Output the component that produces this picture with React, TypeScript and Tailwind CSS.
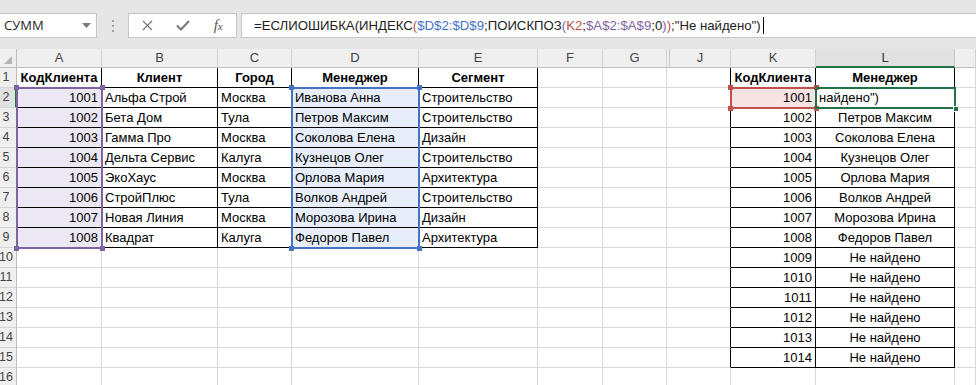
import React from "react";

const t1: string[][] = [
  ["КодКлиента", "Клиент", "Город", "Менеджер", "Сегмент"],
  ["1001", "Альфа Строй", "Москва", "Иванова Анна", "Строительство"],
  ["1002", "Бета Дом", "Тула", "Петров Максим", "Строительство"],
  ["1003", "Гамма Про", "Москва", "Соколова Елена", "Дизайн"],
  ["1004", "Дельта Сервис", "Калуга", "Кузнецов Олег", "Строительство"],
  ["1005", "ЭкоХаус", "Москва", "Орлова Мария", "Архитектура"],
  ["1006", "СтройПлюс", "Тула", "Волков Андрей", "Строительство"],
  ["1007", "Новая Линия", "Москва", "Морозова Ирина", "Дизайн"],
  ["1008", "Квадрат", "Калуга", "Федоров Павел", "Архитектура"],
];

const lCol: Record<number, string> = {
  3: "Петров Максим",
  4: "Соколова Елена",
  5: "Кузнецов Олег",
  6: "Орлова Мария",
  7: "Волков Андрей",
  8: "Морозова Ирина",
  9: "Федоров Павел",
};

const headers = ["A", "B", "C", "D", "E", "F", "G", "", "J", "K", "L", ""];

type Cell = { text: string; align: "l" | "r" | "c"; bold?: boolean };

function cellData(r: number, c: number): Cell {
  if (c <= 4 && r <= 9) {
    const txt = t1[r - 1][c];
    if (r === 1) return { text: txt, align: "c", bold: true };
    return { text: txt, align: c === 0 ? "r" : "l" };
  }
  if (c === 9 && r <= 15) {
    if (r === 1) return { text: "КодКлиента", align: "c", bold: true };
    return { text: String(999 + r), align: "r" };
  }
  if (c === 10 && r <= 15) {
    if (r === 1) return { text: "Менеджер", align: "c", bold: true };
    if (r === 2) return { text: "найдено\")", align: "l" };
    if (r <= 9) return { text: lCol[r], align: "c" };
    return { text: "Не найдено", align: "c" };
  }
  return { text: "", align: "l" };
}

function BodyCell({ r, c }: { r: number; c: number }) {
  const d = cellData(r, c);
  const rBlack = (c <= 4 && r <= 9) || (c >= 8 && c <= 10 && r <= 15);
  const bBlack = (c <= 4 && r <= 9) || ((c === 9 || c === 10) && r <= 15);
  let bg = "bg-white";
  if (c === 0 && r >= 2 && r <= 9) bg = "bg-[#ece8f3]";
  if (c === 3 && r >= 2 && r <= 9) bg = "bg-[#e7eef9]";
  if (c === 9 && r === 2) bg = "bg-[#f8e3e3]";
  const rb = c === 7 ? "border-r-0" : rBlack ? "border-r border-r-black" : "border-r border-r-[#d9d9d9]";
  const bb = bBlack ? "border-b-black" : "border-b-[#d9d9d9]";
  const al = d.align === "r" ? "justify-end pr-[3px]" : d.align === "c" ? "justify-center" : "justify-start pl-[3px]";
  return (
    <div
      className={`h-[20px] border-b ${rb} ${bb} ${bg} ${al} flex items-center overflow-visible whitespace-nowrap text-[13px] leading-[19px] text-black ${d.bold ? "font-bold" : ""}`}
    >
      {d.text}
    </div>
  );
}

function Handle({ pos, color }: { pos: "tl" | "tr" | "bl" | "br"; color: string }) {
  const p =
    pos === "tl"
      ? "-left-[4px] -top-[4px]"
      : pos === "tr"
      ? "-right-[4px] -top-[4px]"
      : pos === "bl"
      ? "-left-[4px] -bottom-[4px]"
      : "-right-[4px] -bottom-[4px]";
  return <div className={`absolute ${p} w-[5px] h-[5px] ${color}`} />;
}

export default function App() {
  const rows = Array.from({ length: 16 }, (_, i) => i + 1);
  const cols = Array.from({ length: 12 }, (_, i) => i);
  return (
    <div className="w-[976px] h-[385px] overflow-hidden bg-white font-['Liberation_Sans',Arial,sans-serif]">
      {/* formula bar */}
      <div className="h-[49px] bg-[#e6e6e6] flex pt-[13px]">
        <div className="w-[97px] h-[25px] bg-white border border-l-0 border-[#c6c6c6] flex items-center justify-between pl-[4px] pr-[5px]">
          <span className="text-[13px] text-[#262626] font-['Open_Sans',sans-serif]">СУММ</span>
          <svg width="9" height="5" viewBox="0 0 9 5">
            <path d="M0 0 L9 0 L4.5 5 Z" fill="#7a7a7a" />
          </svg>
        </div>
        <div className="w-[31px] h-[25px] flex flex-col items-center justify-center gap-[3px]">
          <div className="w-[2px] h-[2px] bg-[#a0a0a0]" />
          <div className="w-[2px] h-[2px] bg-[#a0a0a0]" />
          <div className="w-[2px] h-[2px] bg-[#a0a0a0]" />
        </div>
        <div className="w-[109px] h-[25px] bg-white border border-[#c6c6c6] flex items-center">
          <div className="w-[38px] flex justify-center">
            <svg width="11" height="11" viewBox="0 0 11 11">
              <path d="M1 1 L10 10 M10 1 L1 10" stroke="#777" strokeWidth="1.2" />
            </svg>
          </div>
          <div className="w-[34px] flex justify-center">
            <svg width="14" height="11" viewBox="0 0 14 11">
              <path d="M1 5.5 L5 9.5 L13 1" stroke="#777" strokeWidth="2" fill="none" />
            </svg>
          </div>
          <div className="w-[36px] flex justify-center">
            <span className="font-['Liberation_Serif',serif] italic text-[15px] text-[#555] leading-none">
              f<span className="text-[11px]">x</span>
            </span>
          </div>
        </div>
        <div className="ml-[4px] flex-1 h-[25px] bg-white border border-r-0 border-[#c6c6c6] flex items-center pl-[12px] text-[13.2px] text-[#222] whitespace-nowrap">
          <span>=ЕСЛИОШИБКА(ИНДЕКС</span>
          <span className="text-[#c0504d]">(</span>
          <span className="text-[#4472c4]">$D$2:$D$9</span>
          <span>;ПОИСКПОЗ</span>
          <span className="text-[#8064a2]">(</span>
          <span className="text-[#c0504d]">K2</span>
          <span>;</span>
          <span className="text-[#8064a2]">$A$2:$A$9</span>
          <span>;0</span>
          <span className="text-[#8064a2]">)</span>
          <span className="text-[#c0504d]">)</span>
          <span>;"Не найдено")</span>
          <span className="w-[1px] h-[17px] bg-black ml-[2px]" />
        </div>
      </div>

      {/* column headers */}
      <div className="grid grid-cols-[17px_85px_116px_74px_127px_119px_65px_64px_3px_61px_85px_139px_21px]">
        <div className="h-[19px] bg-[#efefef] border-r border-b border-[#bdbdbd] flex items-end justify-end pr-[4px] pb-[3px]">
          <svg width="8" height="8" viewBox="0 0 8 8">
            <path d="M8 0 L8 8 L0 8 Z" fill="#b5b5b5" />
          </svg>
        </div>
        {cols.map((c) =>
          c === 10 ? (
            <div
              key={c}
              className="h-[19px] bg-[#e1e1e1] border-r border-r-[#c8c8c8] border-b-2 border-b-[#217346] flex items-center justify-center text-[13px] text-[#333]"
            >
              {headers[c]}
            </div>
          ) : c === 7 ? (
            <div key={c} className="h-[19px] bg-[#efefef] border-r border-r-[#c8c8c8] border-b border-b-[#bdbdbd]" />
          ) : (
            <div
              key={c}
              className="h-[19px] bg-[#efefef] border-r border-r-[#d2d2d2] border-b border-b-[#bdbdbd] flex items-center justify-center text-[13px] text-[#444]"
            >
              {headers[c]}
            </div>
          )
        )}
      </div>

      {/* body */}
      <div className="relative grid grid-cols-[17px_85px_116px_74px_127px_119px_65px_64px_3px_61px_85px_139px_21px]">
        {rows.map((r) => (
          <React.Fragment key={r}>
            {r === 2 ? (
              <div className="h-[20px] bg-[#e1e1e1] border-b border-b-[#d4d4d4] border-r-2 border-r-[#217346] flex items-center text-[12.5px] text-[#444] overflow-visible">
                <div className="w-[12px] flex justify-center">{r}</div>
              </div>
            ) : (
              <div className="h-[20px] bg-[#efefef] border-b border-b-[#d4d4d4] border-r border-r-[#bdbdbd] flex items-center text-[12.5px] text-[#444] overflow-visible">
                <div className="w-[12px] flex justify-center">{r}</div>
              </div>
            )}
            {cols.map((c) => (
              <BodyCell key={c} r={r} c={c} />
            ))}
          </React.Fragment>
        ))}

        {/* A2:A9 purple */}
        <div className="absolute left-[16px] top-[19px] w-[87px] h-[162px] border-2 border-[#8064a2] pointer-events-none">
          <Handle pos="tl" color="bg-[#8064a2]" />
          <Handle pos="tr" color="bg-[#8064a2]" />
          <Handle pos="bl" color="bg-[#8064a2]" />
          <Handle pos="br" color="bg-[#8064a2]" />
        </div>
        {/* D2:D9 blue */}
        <div className="absolute left-[291px] top-[19px] w-[129px] h-[162px] border-2 border-[#4472c4] pointer-events-none">
          <Handle pos="tl" color="bg-[#4472c4]" />
          <Handle pos="tr" color="bg-[#4472c4]" />
          <Handle pos="bl" color="bg-[#4472c4]" />
          <Handle pos="br" color="bg-[#4472c4]" />
        </div>
        {/* K2 red */}
        <div className="absolute left-[730px] top-[19px] w-[87px] h-[22px] border-2 border-[#c0504d] pointer-events-none">
          <Handle pos="tl" color="bg-[#c0504d]" />
          <Handle pos="tr" color="bg-[#c0504d]" />
          <Handle pos="bl" color="bg-[#c0504d]" />
          <Handle pos="br" color="bg-[#c0504d]" />
        </div>
        {/* L2 active */}
        <div className="absolute left-[815px] top-[19px] w-[141px] h-[22px] border-2 border-[#217346] pointer-events-none">
          <div className="absolute -right-[5px] -bottom-[5px] w-[6px] h-[6px] bg-[#217346] border border-white" />
        </div>
      </div>
    </div>
  );
}
